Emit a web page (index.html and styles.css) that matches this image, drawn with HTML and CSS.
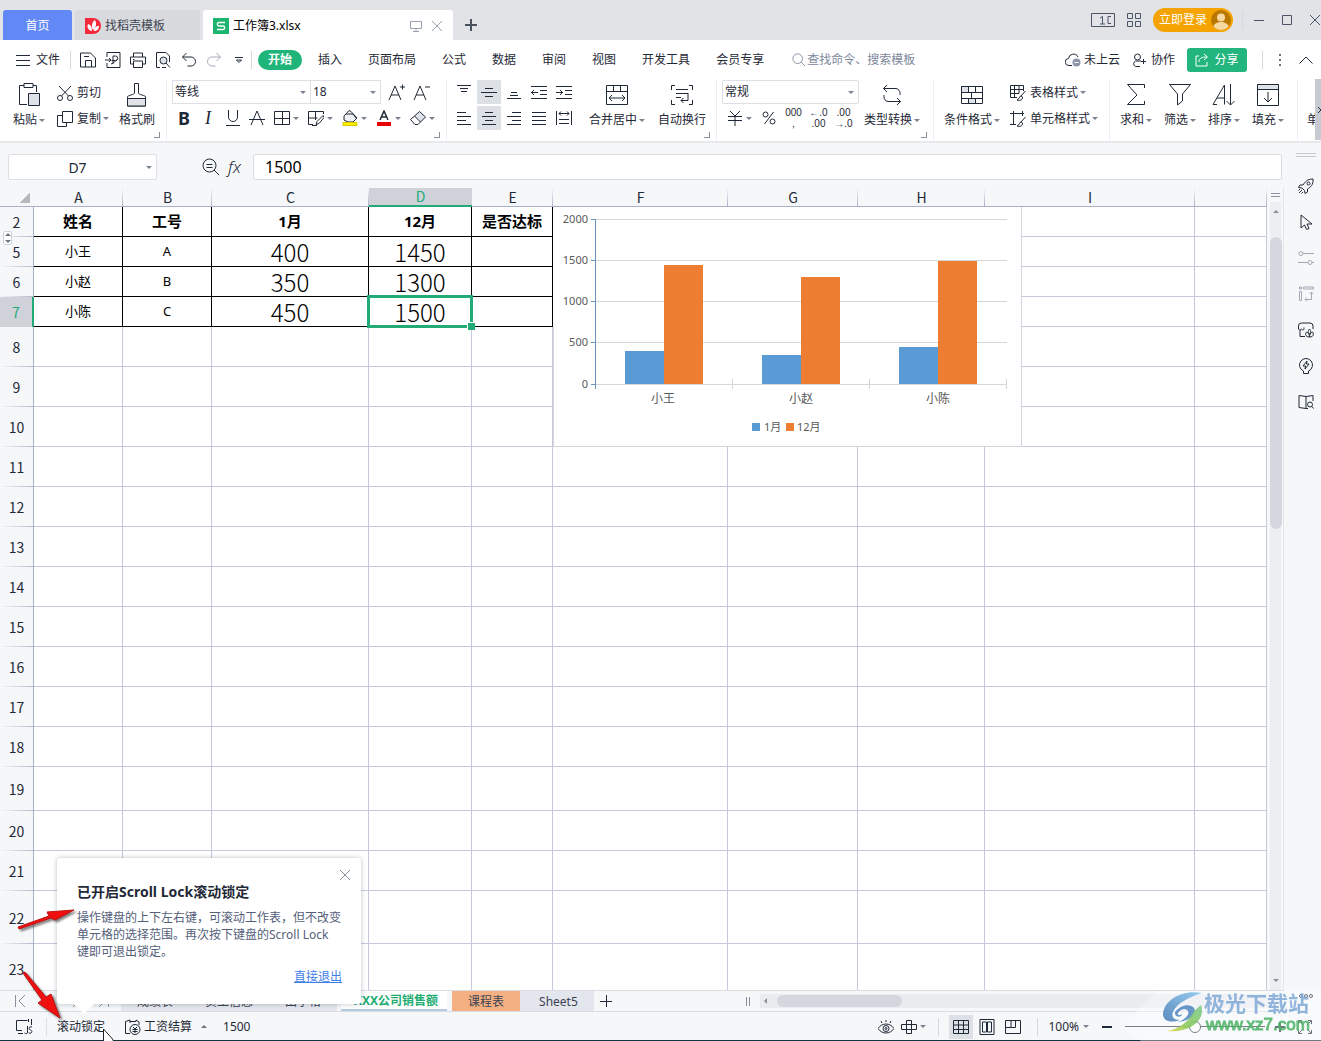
FILE: index.html
```html
<!DOCTYPE html>
<html lang="zh-CN">
<head>
<meta charset="utf-8">
<title>工作簿3.xlsx</title>
<link rel="stylesheet" href="styles.css">
</head>
<body>
<svg class="sprite" aria-hidden="true">
  <symbol id="save" viewBox="0 0 16 16"><path d="M.500 15V1h10l5 5v9zM5.500 15V8.500h6V15M4 4.500h5"/></symbol>
  <symbol id="pdf" viewBox="0 0 16 16"><path d="M2 5V.5h13v15H2V11M0 8h6M4 6l2 2-2 2M8 12V4h2.500a2 2 0 0 1 0 4.500H6.500M6 12c3-1 4-3 6-4"/></symbol>
  <symbol id="print" viewBox="0 0 16 16"><path d="M3.500 5V1h9v4M3 12H.500V5h15v7H13M3.500 9h9v6.500h-9zM3 7.500h1.500"/></symbol>
  <symbol id="preview" viewBox="0 0 16 16"><path d="M5 15.500H1.500V.500H11l3.500 3.500v6"/><circle cx="8.500" cy="8.500" r="3.500" fill="#dfe2e8"/><path d="M11 11l4 4.500M7 15.500h4"/></symbol>
  <symbol id="undo" viewBox="0 0 16 16"><path d="M5.500 1 1.500 5l4 4M1.500 5H10a4.500 4.500 0 0 1 0 9H6.500"/></symbol>
  <symbol id="cut" viewBox="0 0 16 16"><circle cx="3" cy="13" r="2.500"/><circle cx="13" cy="13" r="2.500"/><path d="M2 1l9.500 10M14 1 4.500 11"/></symbol>
  <symbol id="copy" viewBox="0 0 16 16"><path d="M5.500.500h10v11h-10z"/><path d="M5.500 4.500h-5v11h9v-4"/></symbol>
  <symbol id="paste" viewBox="0 0 24 26"><path d="M7 3.500H2.500v19H10M16 3.500h3.500V10M7 1.500h9v4H7z"/><path d="M11.500 11.500h11v12h-11z" fill="#dfe2e8"/></symbol>
  <symbol id="brush" viewBox="0 0 24 26"><path d="M9.500 1.500h4V11c0 2 7 2 7 4v9h-18v-9c0-2 7-2 7-4z"/><path d="M2.500 16.500h18v7.500h-18z" fill="#dfe2e8"/></symbol>
  <symbol id="aplus" viewBox="0 0 18 18"><path d="M1 17 7 3l6 14M3 12h8M12 4h5M14.500 1.500v5"/></symbol>
  <symbol id="aminus" viewBox="0 0 18 18"><path d="M1 17 7 3l6 14M3 12h8M12 4h5"/></symbol>
  <symbol id="underline" viewBox="0 0 16 16"><path d="M3.500 0v7a4.500 4.500 0 0 0 9 0V0M1 15.500h14"/></symbol>
  <symbol id="strike" viewBox="0 0 16 16"><path d="M2 15 8 1l6 14M0 9.500h16"/></symbol>
  <symbol id="border" viewBox="0 0 16 16"><path d="M.500 1.500h15v13H.500zM8.500 1.500v13M.500 8.500h15"/></symbol>
  <symbol id="penborder" viewBox="0 0 16 16"><path d="M5 14.500H.500v-13h15V4M.500 8h9M7.500 2v8M15 5.500l-6 6-1 3 3-1 5-6zM4 15.500h5"/></symbol>
  <symbol id="fill" viewBox="0 0 16 16"><path d="M7 .500 2 6v4l4 2h5l4-4-6-6.500z" fill="#f0f1f4"/><path d="M4 4h7l3 4"/><path d="M1 12.500h14v3H1z" fill="#fff200" stroke="#d6c800"/></symbol>
  <symbol id="fontcolor" viewBox="0 0 16 16"><path d="M4 10 8 1l4 9M5.500 7h5" stroke-width="1.500"/><path d="M1 12h14v4H1z" fill="#e60000" stroke="none"/></symbol>
  <symbol id="eraser" viewBox="0 0 16 16"><path d="M9.500 1.500l6 5.500-5 5-6-6z" fill="#dfe2e8"/><path d="M4.500 6 .500 9.500l4.500 5h3l2.500-2.500"/></symbol>
  <symbol id="vtop" viewBox="0 0 16 16"><path d="M1 1.500h14M4 4.500h8M5 7.500h6"/></symbol>
  <symbol id="vmid" viewBox="0 0 16 16"><path d="M4 4.500h8M0 8.500h16M4 12.500h8"/></symbol>
  <symbol id="vbot" viewBox="0 0 16 16"><path d="M5 8.500h6M4 11.500h8M1 14.500h14"/></symbol>
  <symbol id="outdent" viewBox="0 0 16 16"><path d="M0 2.500h16M9 6.500h7M9 10.500h7M0 14.500h16M0 8.500h7M3 6 .500 8.500 3 11"/></symbol>
  <symbol id="indent" viewBox="0 0 16 16"><path d="M0 2.500h16M9 6.500h7M9 10.500h7M0 14.500h16M0 8.500h7M4 6l2.500 2.500L4 11"/></symbol>
  <symbol id="left" viewBox="0 0 16 16"><path d="M1 2.500h9M1 6.500h14M1 10.500h9M1 14.500h14"/></symbol>
  <symbol id="center" viewBox="0 0 16 16"><path d="M4 2.500h8M1 6.500h14M4 10.500h8M1 14.500h14"/></symbol>
  <symbol id="right" viewBox="0 0 16 16"><path d="M6 2.500h9M1 6.500h14M6 10.500h9M1 14.500h14"/></symbol>
  <symbol id="justify" viewBox="0 0 16 16"><path d="M1 2.500h14M1 6.500h14M1 10.500h14M1 14.500h14"/></symbol>
  <symbol id="spread" viewBox="0 0 16 16"><path d="M.500 1v14M15.500 1v14M3 3.500h10M5 1.500l-2 2 2 2M11 1.500l2 2-2 2M3 9.500h10M3 13.500h10"/></symbol>
  <symbol id="merge" viewBox="0 0 24 24"><path d="M1.500 2.500h21v19h-21zM1.500 8.500h21M8.500 2.500v6M15.500 2.500v6M4 15h16M7 12l-3 3 3 3M17 12l3 3-3 3"/></symbol>
  <symbol id="wrap" viewBox="0 0 24 24"><path d="M5 2.500H1.500V7M19 2.500h3.500V7M5 21.500H1.500V17M19 21.500h3.500V17M6 6.500h12M6 10.500h12M6 14.500h5M18 10v7.500h-7M13.500 15 11 17.500l2.500 2.500"/></symbol>
  <symbol id="convert" viewBox="0 0 24 24"><path d="M7 2 3.500 5.500 7 9M3.500 5.500H16a5 5 0 0 1 4 5V12M17 15l3.500 3.500L17 22M20.500 18.500H8a5 5 0 0 1-4-5V12"/></symbol>
  <symbol id="cond" viewBox="0 0 24 24"><path d="M1.500 3.500h7v6h-7zM8.500 15.500h7v5h-7z" fill="#dfe2e8"/><path d="M1.500 3.500h21v17h-21zM1.500 9.500h21M1.500 15.500h21M8.500 3.500v6M15.500 3.500v6M11.500 9.500v6M8.500 15.500v5M15.500 15.500v5"/></symbol>
  <symbol id="tstyle" viewBox="0 0 16 16"><path d="M7 12.500H.500V.500h13V6M.500 4.500h13M.500 8.500H9M4.500.500v12M9 .500v8M15.500 6 11 11M11 11c-2 0-1 3-4 4 3 1 6 0 5.500-3z"/></symbol>
  <symbol id="cstyle" viewBox="0 0 16 16"><path d="M0 2.500h14M3.500 0v13.500M0 13.500h6M12.500 0v5M15.500 6 11 11M11 11c-2 0-1 3-4 4 3 1 6 0 5.500-3z"/></symbol>
  <symbol id="sum" viewBox="0 0 24 24"><path d="M20.500 5V1.500h-17L13 12 3.500 21.500h17V18"/></symbol>
  <symbol id="filter" viewBox="0 0 24 24"><path d="M1.500 1.500h21L14.500 11v7l-5 4V11z"/></symbol>
  <symbol id="sort" viewBox="0 0 24 24"><path d="M1 21.500 12.500 2v19.500M5 15h7.500M1 21.500h4M18.500 1v20.500M14.500 18l4 4 4-4"/></symbol>
  <symbol id="fillin" viewBox="0 0 24 24"><path d="M1.500 1.500h21v5h-21z" fill="#dfe2e8"/><path d="M1.500 1.500h21v21h-21zM12 9v10M8 15l4 4 4-4"/></symbol>
  <symbol id="cross" viewBox="0 0 12 12"><path d="M1 1l10 10M11 1 1 11"/></symbol>
  <symbol id="search" viewBox="0 0 16 16"><circle cx="6.500" cy="6.500" r="5.500"/><path d="M10.500 10.500 15 15"/></symbol>
</svg>

<header class="titlebar">
  <button class="home-tab">首页</button>
  <button class="doc-tab template-tab">
    <svg class="logo" viewBox="0 0 16 16"><path d="M0 0h8a8 8 0 0 1 0 16H0z" fill="#f5293c"/><path d="M7 13C2 12 2 8 3 6c3 1 4 3 4 7zM8 12C6 8 7 4 10 2c2 4 1 8-2 10zM9 13c0-3 2-5 5-5 0 3-2 5-5 5z" fill="#fff"/></svg>
    <span>找稻壳模板</span>
  </button>
  <div class="doc-tab active-doc">
    <svg class="logo" viewBox="0 0 16 16"><path d="M0 0h16v16H0z" fill="#1db46f"/><path d="M12 4.500H6a1.700 1.700 0 0 0 0 3.500h4a1.700 1.700 0 0 1 0 3.500H4" fill="none" stroke="#fff" stroke-width="1.300"/></svg>
    <span>工作簿3.xlsx</span>
    <svg class="ic i12 pale push" viewBox="0 0 12 12"><path d="M.500 1.500h11v7H.500zM6 8.500v3M3 11.500h6"/></svg>
    <button class="plain pale" aria-label="关闭"><svg class="ic i12"><use href="#cross"/></svg></button>
  </div>
  <button class="plain new-tab" aria-label="新建"><svg class="ic i12" viewBox="0 0 12 12"><path d="M6 0v12M0 6h12" stroke-width="2"/></svg></button>
  <div class="window-tools">
    <svg class="ic winpic" viewBox="0 0 24 16"><path d="M.500 1.500h23v13H.500zM20 4.500h-3v7h3M9 6l2.500-1.500V12M9 12h5"/></svg>
    <svg class="ic i14" viewBox="0 0 14 14"><path d="M.500.500h5v5h-5zM8.500.500h5v5h-5zM.500 8.500h5v5h-5zM8.500 8.500h5v5h-5z"/></svg>
    <button class="login"><span>立即登录</span>
      <svg class="avatar" viewBox="0 0 20 20"><circle cx="10" cy="10" r="10" fill="#b97800"/><circle cx="10" cy="7.500" r="4" fill="#f6d9a0"/><path d="M2.500 16.500c1-6 14-6 15 0a10 10 0 0 1-15 0z" fill="#f6d9a0"/></svg></button>
    <span class="vsep"></span>
    <button class="plain" aria-label="最小化"><svg class="ic i12" viewBox="0 0 12 12"><path d="M1 6.500h10"/></svg></button>
    <button class="plain" aria-label="最大化"><svg class="ic i12" viewBox="0 0 12 12"><path d="M1.500 1.500h9v9h-9z"/></svg></button>
    <button class="plain" aria-label="关闭窗口"><svg class="ic i12"><use href="#cross"/></svg></button>
  </div>
</header>

<nav class="menubar">
  <button class="plain file"><svg class="ic i14" viewBox="0 0 14 14"><path d="M0 2.500h14M0 7.500h14M0 12.500h14"/></svg>文件</button>
  <span class="vsep"></span>
  <div class="quick">
    <button class="plain" aria-label="保存"><svg class="ic"><use href="#save"/></svg></button>
    <button class="plain" aria-label="输出为PDF"><svg class="ic"><use href="#pdf"/></svg></button>
    <button class="plain" aria-label="打印"><svg class="ic"><use href="#print"/></svg></button>
    <button class="plain" aria-label="打印预览"><svg class="ic"><use href="#preview"/></svg></button>
    <button class="plain" aria-label="撤销"><svg class="ic"><use href="#undo"/></svg></button>
    <button class="plain faded" aria-label="恢复"><svg class="ic flip"><use href="#undo"/></svg></button>
    <button class="plain" aria-label="更多"><svg class="ic i8" viewBox="0 0 8 8"><path d="M0 1.500h8M1.500 4h5L4 6.500z"/></svg></button>
  </div>
  <span class="vsep"></span>
  <div class="menus">
    <button class="plain current">开始</button>
    <button class="plain">插入</button>
    <button class="plain">页面布局</button>
    <button class="plain">公式</button>
    <button class="plain">数据</button>
    <button class="plain">审阅</button>
    <button class="plain">视图</button>
    <button class="plain">开发工具</button>
    <button class="plain">会员专享</button>
  </div>
  <label class="finder"><svg class="ic i14"><use href="#search"/></svg><input type="text" placeholder="查找命令、搜索模板" aria-label="查找命令"></label>
  <div class="account">
    <button class="plain cloud"><svg class="ic" viewBox="0 0 16 16"><path d="M7 13.500H4a3.500 3.500 0 0 1-.500-7A5 5 0 0 1 13 5"/><circle cx="11.500" cy="10.500" r="4" fill="#8f97a8" stroke="none"/><path d="M9.500 10.500h4" stroke="#fff"/></svg>未上云</button>
    <button class="plain coop"><svg class="ic i14" viewBox="0 0 14 14"><circle cx="5.500" cy="4" r="3"/><path d="M9 8H3.500a3 3 0 0 0 0 5.500H8M9 8.500h5M11.500 6v5"/></svg>协作</button>
    <button class="share"><svg class="ic i14" viewBox="0 0 14 14"><path d="M4 3H1v10h11V9M4 9c0-4 3-5 8-5M9 1l3.500 3L9 7"/></svg>分享</button>
    <span class="vsep"></span>
    <button class="plain" aria-label="更多选项"><svg class="ic i14" viewBox="0 0 14 14"><path d="M6 1h2v2H6zM6 6h2v2H6zM6 11h2v2H6z" fill="#6b7380" stroke="none"/></svg></button>
    <button class="plain" aria-label="折叠功能区"><svg class="ic i14" viewBox="0 0 14 14"><path d="M.500 10.500 7 4l6.500 6.500"/></svg></button>
  </div>
</nav>

<section class="ribbon" aria-label="开始">
  <div class="group g-clip corner">
    <button class="big"><svg class="ic i24"><use href="#paste"/></svg><span class="drop">粘贴</span></button>
    <div class="stack">
      <button class="line"><svg class="ic"><use href="#cut"/></svg><span>剪切</span></button>
      <button class="line"><svg class="ic"><use href="#copy"/></svg><span class="drop">复制</span></button>
    </div>
    <button class="big"><svg class="ic i24"><use href="#brush"/></svg><span>格式刷</span></button>
  </div>
  <div class="group g-font corner">
    <div class="stack">
      <div class="tools">
        <span class="pick pick-font"><select aria-label="字体"><option>等线</option></select></span>
        <span class="pick pick-size"><select aria-label="字号"><option>18</option></select></span>
        <button class="tool first-a" aria-label="增大字号"><svg class="ic i18"><use href="#aplus"/></svg></button>
        <button class="tool" aria-label="减小字号"><svg class="ic i18"><use href="#aminus"/></svg></button>
      </div>
      <div class="tools letters">
        <button class="tool bold">B</button>
        <button class="tool italic">I</button>
        <button class="tool" aria-label="下划线"><svg class="ic"><use href="#underline"/></svg></button>
        <button class="tool" aria-label="删除线"><svg class="ic"><use href="#strike"/></svg></button>
        <button class="tool wide drop" aria-label="边框"><svg class="ic"><use href="#border"/></svg></button>
        <button class="tool wide drop" aria-label="绘图边框"><svg class="ic"><use href="#penborder"/></svg></button>
        <button class="tool wide drop" aria-label="填充颜色"><svg class="ic"><use href="#fill"/></svg></button>
        <button class="tool wide drop" aria-label="字体颜色"><svg class="ic"><use href="#fontcolor"/></svg></button>
        <button class="tool wide drop" aria-label="清除"><svg class="ic"><use href="#eraser"/></svg></button>
      </div>
    </div>
  </div>
  <div class="group g-align corner">
    <div class="align-grid">
      <button class="tool" aria-label="顶端对齐"><svg class="ic"><use href="#vtop"/></svg></button>
      <button class="tool on" aria-label="垂直居中"><svg class="ic"><use href="#vmid"/></svg></button>
      <button class="tool" aria-label="底端对齐"><svg class="ic"><use href="#vbot"/></svg></button>
      <button class="tool" aria-label="减少缩进"><svg class="ic"><use href="#outdent"/></svg></button>
      <button class="tool" aria-label="增加缩进"><svg class="ic"><use href="#indent"/></svg></button>
      <button class="tool" aria-label="左对齐"><svg class="ic"><use href="#left"/></svg></button>
      <button class="tool on" aria-label="水平居中"><svg class="ic"><use href="#center"/></svg></button>
      <button class="tool" aria-label="右对齐"><svg class="ic"><use href="#right"/></svg></button>
      <button class="tool" aria-label="两端对齐"><svg class="ic"><use href="#justify"/></svg></button>
      <button class="tool" aria-label="分散对齐"><svg class="ic"><use href="#spread"/></svg></button>
    </div>
    <button class="big"><svg class="ic i24"><use href="#merge"/></svg><span class="drop">合并居中</span></button>
    <button class="big"><svg class="ic i24"><use href="#wrap"/></svg><span>自动换行</span></button>
  </div>
  <div class="group g-number corner">
    <div class="stack">
      <span class="pick pick-number"><select aria-label="数字格式"><option>常规</option></select></span>
      <div class="tools">
        <button class="tool wide drop" aria-label="货币"><svg class="ic" viewBox="0 0 16 16"><path d="M3 1l5 5 5-5M1 6.500h14M1 10.500h14M8 6v10"/></svg></button>
        <button class="tool" aria-label="百分比"><svg class="ic i14" viewBox="0 0 14 14"><circle cx="3.500" cy="3.500" r="2.500"/><circle cx="10.500" cy="10.500" r="2.500"/><path d="M11.500 1l-9 12"/></svg></button>
        <button class="tool digits"><span>000</span><span>,</span></button>
        <button class="tool digits"><span>←.0</span><span>.00</span></button>
        <button class="tool digits"><span>.00</span><span>→.0</span></button>
      </div>
    </div>
    <button class="big"><svg class="ic i24"><use href="#convert"/></svg><span class="drop">类型转换</span></button>
  </div>
  <div class="group g-style">
    <button class="big"><svg class="ic i24"><use href="#cond"/></svg><span class="drop">条件格式</span></button>
    <div class="stack">
      <button class="line"><svg class="ic"><use href="#tstyle"/></svg><span class="drop">表格样式</span></button>
      <button class="line"><svg class="ic"><use href="#cstyle"/></svg><span class="drop">单元格样式</span></button>
    </div>
  </div>
  <div class="group g-edit">
    <button class="big"><svg class="ic i24"><use href="#sum"/></svg><span class="drop">求和</span></button>
    <button class="big"><svg class="ic i24"><use href="#filter"/></svg><span class="drop">筛选</span></button>
    <button class="big"><svg class="ic i24"><use href="#sort"/></svg><span class="drop">排序</span></button>
    <button class="big"><svg class="ic i24"><use href="#fillin"/></svg><span class="drop">填充</span></button>
  </div>
  <div class="group g-more"><button class="big"><span>单</span></button></div>
  <button class="ribbon-next" aria-label="向右滚动"><svg class="ic i8" viewBox="0 0 8 8"><path d="M3 1l3 3-3 3"/></svg></button>
</section>

<main class="workspace">
  <div class="book">
    <div class="formula-bar">
      <div class="pick name-box"><input type="text" value="D7" aria-label="名称框"></div>
      <div class="fx-tools">
        <button class="plain" aria-label="浏览公式"><svg class="ic i18" viewBox="0 0 18 18"><circle cx="7.500" cy="7.500" r="6.500"/><path d="M12 12l5 5M4.500 6.500h6M4.500 9.500h6"/></svg></button>
        <button class="plain fx">fx</button>
      </div>
      <input class="formula" type="text" value="1500" aria-label="编辑栏">
    </div>
    <div class="grid-area">
      <div class="sheet">
        <table>
          <colgroup><col class="c-head"><col class="c-a"><col class="c-a"><col class="c-c"><col class="c-d"><col class="c-e"><col class="c-f"><col class="c-g"><col class="c-h"><col class="c-i"><col></colgroup>
          <thead><tr><th class="all"></th><th>A</th><th>B</th><th>C</th><th class="sel">D</th><th>E</th><th>F</th><th>G</th><th>H</th><th>I</th><th></th></tr></thead>
          <tbody>
            <tr class="data head"><th>2</th><td>姓名</td><td>工号</td><td>1月</td><td>12月</td><td>是否达标</td><td></td><td></td><td></td><td></td><td></td></tr>
            <tr class="data"><th>5</th><td>小王</td><td>A</td><td class="num">400</td><td class="num">1450</td><td></td><td></td><td></td><td></td><td></td><td></td></tr>
            <tr class="data"><th>6</th><td>小赵</td><td>B</td><td class="num">350</td><td class="num">1300</td><td></td><td></td><td></td><td></td><td></td><td></td></tr>
            <tr class="data"><th class="sel">7</th><td>小陈</td><td>C</td><td class="num">450</td><td class="num picked">1500</td><td></td><td></td><td></td><td></td><td></td><td></td></tr>
            <tr><th>8</th><td></td><td></td><td></td><td></td><td></td><td></td><td></td><td></td><td></td><td></td></tr>
            <tr><th>9</th><td></td><td></td><td></td><td></td><td></td><td></td><td></td><td></td><td></td><td></td></tr>
            <tr><th>10</th><td></td><td></td><td></td><td></td><td></td><td></td><td></td><td></td><td></td><td></td></tr>
            <tr><th>11</th><td></td><td></td><td></td><td></td><td></td><td></td><td></td><td></td><td></td><td></td></tr>
            <tr><th>12</th><td></td><td></td><td></td><td></td><td></td><td></td><td></td><td></td><td></td><td></td></tr>
            <tr><th>13</th><td></td><td></td><td></td><td></td><td></td><td></td><td></td><td></td><td></td><td></td></tr>
            <tr><th>14</th><td></td><td></td><td></td><td></td><td></td><td></td><td></td><td></td><td></td><td></td></tr>
            <tr><th>15</th><td></td><td></td><td></td><td></td><td></td><td></td><td></td><td></td><td></td><td></td></tr>
            <tr><th>16</th><td></td><td></td><td></td><td></td><td></td><td></td><td></td><td></td><td></td><td></td></tr>
            <tr><th>17</th><td></td><td></td><td></td><td></td><td></td><td></td><td></td><td></td><td></td><td></td></tr>
            <tr><th>18</th><td></td><td></td><td></td><td></td><td></td><td></td><td></td><td></td><td></td><td></td></tr>
            <tr class="h44"><th>19</th><td></td><td></td><td></td><td></td><td></td><td></td><td></td><td></td><td></td><td></td></tr>
            <tr><th>20</th><td></td><td></td><td></td><td></td><td></td><td></td><td></td><td></td><td></td><td></td></tr>
            <tr><th>21</th><td></td><td></td><td></td><td></td><td></td><td></td><td></td><td></td><td></td><td></td></tr>
            <tr class="h53"><th>22</th><td></td><td></td><td></td><td></td><td></td><td></td><td></td><td></td><td></td><td></td></tr>
            <tr class="h50"><th>23</th><td></td><td></td><td></td><td></td><td></td><td></td><td></td><td></td><td></td><td></td></tr>
          </tbody>
        </table>
        <span class="hidden-rows"></span>
        <svg class="chart" viewBox="0 0 469 240" role="img" aria-label="1月与12月对比">
          <path d="M0 0h469v240H0z" fill="#fff"/>
          <path d="M468.500 0v239.500H0M.500 120v120" fill="none" stroke="#d4d5dc"/>
          <path d="M42 12.500h412M42 53.500h412M42 94.500h412M42 135.500h412M42 177.500h412M179.500 172v10M316.500 172v10M453.500 172v10" stroke="#d4d6da"/>
          <path d="M42.500 12v170M38 12.500h4M38 53.500h4M38 94.500h4M38 135.500h4M38 177.500h4" stroke="#6d93bd"/>
          <path d="M72 144h39v33H72zM209 148h39v29h-39zM346 140h39v37h-39zM199 216h8v8h-8z" fill="#5b9bd5"/>
          <path d="M111 58h39v119h-39zM248 70h39v107h-39zM385 54h39v123h-39zM233 216h8v8h-8z" fill="#ed7d31"/>
          <g text-anchor="end"><text x="35" y="16">2000</text><text x="35" y="57">1500</text><text x="35" y="98">1000</text><text x="35" y="139">500</text><text x="35" y="181">0</text></g>
          <g text-anchor="middle" class="cat"><text x="110" y="196">小王</text><text x="248" y="196">小赵</text><text x="385" y="196">小陈</text></g>
          <text x="211" y="224">1月</text><text x="244" y="224">12月</text>
        </svg>
      </div>
      <div class="vscroll"><span class="split"></span><span class="track"><i class="up"></i><span class="thumb"></span><i class="down"></i></span></div>
    </div>
    <div class="sheet-tabs">
      <div class="tab-nav">
        <button class="plain" aria-label="首个"><svg class="ic i12" viewBox="0 0 12 12"><path d="M1.500 0v12M11 0 5 6l6 6"/></svg></button>
        <button class="plain" aria-label="上一个"><svg class="ic i12" viewBox="0 0 12 12"><path d="M9 0 3 6l6 6"/></svg></button>
        <button class="plain" aria-label="下一个"><svg class="ic i12" viewBox="0 0 12 12"><path d="M3 0l6 6-6 6"/></svg></button>
        <button class="plain" aria-label="末个"><svg class="ic i12" viewBox="0 0 12 12"><path d="M10.500 0v12M1 0l6 6-6 6"/></svg></button>
      </div>
      <button class="sheet-tab">成绩表</button>
      <button class="sheet-tab">员工信息</button>
      <button class="sheet-tab">田字格</button>
      <button class="sheet-tab active">XXX公司销售额</button>
      <button class="sheet-tab orange">课程表</button>
      <button class="sheet-tab last">Sheet5</button>
      <button class="plain add" aria-label="新建工作表"><svg class="ic i12" viewBox="0 0 12 12"><path d="M6.500 0v12M0 6.500h12"/></svg></button>
      <div class="hscroll"><span class="grip"></span><span class="htrack"><i></i><span class="hthumb"></span></span></div>
    </div>
  </div>
  <aside class="side">
    <span class="side-grip"></span>
    <button class="plain" aria-label="推荐"><svg class="ic" viewBox="0 0 16 16"><path d="M15 1c-6 0-8 3-10 6H2L.500 9.500 4 10l2.500 2.500.500 3L9.500 14v-3c3-2 6-4 5.500-10zM4 12l-3 3M2 11l-1.500 1.500M5 14l-1.500 1.500"/><circle cx="10.500" cy="5.500" r="1.500"/></svg></button>
    <button class="plain" aria-label="选择"><svg class="ic" viewBox="0 0 16 16"><path d="M3 1v13l3.500-3 2 4.500 2.500-1-2-4.500h5z"/></svg></button>
    <button class="plain faded" aria-label="属性"><svg class="ic" viewBox="0 0 16 16"><circle cx="3" cy="3.500" r="2"/><circle cx="12" cy="12.500" r="2"/><path d="M5 3.500h11M0 12.500h10M14 12.500h2"/></svg></button>
    <button class="plain faded" aria-label="分析"><svg class="ic" viewBox="0 0 16 16"><path d="M1.500 1h2v2h-2zM5.500 1h10v2h-10zM1.500 5.500h2v9h-2zM13.500 6v7.500H7M11.500 8l2-2 2 2M9 11.500l-2 2 2 2"/></svg></button>
    <button class="plain" aria-label="备份"><svg class="ic" viewBox="0 0 16 16"><path d="M7 14.500H2v-6L.500 7V4a3 3 0 0 1 3-3H12a3 3 0 0 1 3 3v3M2 8.500c0-1 1-2 2-1 1 1 2 1 2-2"/><path d="M11.500 15c-5 0-4-4-3-5 2 1 3 2 3 5zM11.500 15c5 0 4-4 3-5-2 1-3 2-3 5zM11.500 12c-2-2-1-4 0-5 1 1 2 3 0 5z"/></svg></button>
    <button class="plain" aria-label="效率"><svg class="ic" viewBox="0 0 16 16"><path d="M5.500 15.500V13a6.500 6.500 0 1 1 5 0v2.500zM9 3 5 8h2.500L7 11l4-5H8.500z"/></svg></button>
    <button class="plain" aria-label="帮助"><svg class="ic" viewBox="0 0 16 16"><path d="M8 14.500l-7-1v-12l7 1 7-1V7M8 2.500v12h2"/><circle cx="12" cy="10.500" r="2.500"/><path d="M14 12.500l1.500 2"/></svg></button>
    <button class="plain side-more" aria-label="更多"><svg class="ic" viewBox="0 0 16 16"><circle cx="3" cy="8" r="1.500"/><circle cx="8" cy="8" r="1.500"/><circle cx="13" cy="8" r="1.500"/></svg></button>
  </aside>
</main>

<footer class="status">
  <button class="plain js" aria-label="JS宏"><svg class="ic i18" viewBox="0 0 18 18"><path d="M7 12.500H1.500v-10h11M3 15.500h5M13.500 1v3M16.500 1v6M12.500 8v6c0 2-2 2-3 1M17 9c-3-1-4 2-1.500 3s1.500 4-2 3"/></svg></button>
  <div class="lock-holder">
    <button class="plain">滚动锁定</button>
    <div class="popup" role="dialog" aria-label="滚动锁定">
      <button class="plain close" aria-label="关闭提示"><svg class="ic i12"><use href="#cross"/></svg></button>
      <h2>已开启Scroll Lock滚动锁定</h2>
      <p>操作键盘的上下左右键，可滚动工作表，但不改变单元格的选择范围。再次按下键盘的Scroll Lock<br>键即可退出锁定。</p>
      <a href="#">直接退出</a>
    </div>
  </div>
  <button class="plain pay"><svg class="ic" viewBox="0 0 16 16"><path d="M5 14.500H.500v-12L5 1v3M5 2.500h6V1l3 2v3"/><circle cx="10" cy="10.500" r="5"/><path d="M8 8l2 2 2-2M7.500 10.500h5M7.500 12.500h5M10 10v4"/></svg>工资结算<i class="tri-up"></i></button>
  <output>1500</output>
  <div class="status-right">
    <button class="plain" aria-label="护眼模式"><svg class="ic" viewBox="0 0 16 16"><path d="M0 9.500c4-6 12-6 16 0-4 6-12 6-16 0zM8 1v2M3 2l1 2M13 2l-1 2"/><circle cx="8" cy="9.500" r="3"/><circle cx="8" cy="9.500" r="1"/></svg></button>
    <button class="plain drop" aria-label="阅读模式"><svg class="ic" viewBox="0 0 16 16"><path d="M5.500 1.500h5v13h-5zM.500 5.500h15v5H.500z"/></svg></button>
    <span class="vsep"></span>
    <div class="views">
      <button class="tool on" aria-label="普通视图"><svg class="ic" viewBox="0 0 16 16"><path d="M.500 1.500h15v13H.500zM5.500 1.500v13M10.500 1.500v13M.500 6h15M.500 10.500h15"/></svg></button>
      <button class="tool" aria-label="页面布局"><svg class="ic" viewBox="0 0 16 16"><path d="M1 .500h14v15H1zM3.500 3h4v10h-4zM8.500 3h4v10h-4z"/></svg></button>
      <button class="tool" aria-label="分页预览"><svg class="ic" viewBox="0 0 16 16"><path d="M.500 1.500h15v13H.500zM.500 8.500h10v-7M6 1.500v7"/></svg></button>
    </div>
    <span class="vsep"></span>
    <button class="plain drop zoom-value">100%</button>
    <button class="plain" aria-label="缩小"><svg class="ic i12" viewBox="0 0 12 12"><path d="M1 6h10" stroke-width="2"/></svg></button>
    <input class="zoom" type="range" min="0" max="200" value="100" aria-label="缩放">
    <button class="plain" aria-label="放大"><svg class="ic i12" viewBox="0 0 12 12"><path d="M1 6h10M6 1v10" stroke-width="2"/></svg></button>
    <button class="plain" aria-label="全屏"><svg class="ic i14" viewBox="0 0 14 14"><path d="M.500 4V.500H4M10 .500h3.500V4M13.500 10v3.500H10M4 13.500H.500V10M1 1l4 4M13 1 9 5M13 13 9 9M1 13l4-4"/></svg></button>
  </div>
</footer>

<svg class="arrows" viewBox="0 0 120 140" aria-hidden="true">
  <g class="shade"><path d="M18 26 49 15 47 11 74 9 55 19 51 17 19 28z"/><path d="M23 72 42 99 38 102 60 117 51 93 46 96 25 71z"/></g>
  <path d="M103.500 128v18l4-4 3 5h6l-4-9z" fill="#fff" stroke="#222"/>
</svg>
<svg class="watermark" viewBox="0 0 200 56" aria-hidden="true">
  <defs>
    <linearGradient id="leaf" x1="1" y1="0" x2="0" y2="1"><stop offset="0" stop-color="#7cc98a"/><stop offset=".6" stop-color="#8ccb63"/><stop offset="1" stop-color="#e6d544"/></linearGradient>
    <linearGradient id="wave" x1="1" y1="0" x2="0" y2="1"><stop offset="0" stop-color="#8cc8ee"/><stop offset="1" stop-color="#4c7fb8"/></linearGradient>
  </defs>
  <path d="M36 6h164v50H20L0 42z" fill="#fff" opacity=".35"/>
  <path d="M81 8C62 4 42 15 42 30c1 7 9 8 17 5-6 0-9-3-7-8 4-9 16-15 29-19z" fill="url(#wave)" opacity=".9"/>
  <path d="M54 27c5-7 15-9 19-4 4 6-5 13-16 14 6-2 12-7 10-11-2-3-8-2-10 2-1 2 2 3 4 1 0 4-8 4-7-2z" fill="#4f86bd" opacity=".85"/>
  <path d="M46 46c10-1 22-9 27-20l7-6c5 14-9 28-34 26z" fill="url(#leaf)" opacity=".9"/>
  <text class="wm-name" x="83" y="26">极光下载站</text>
  <text class="wm-url" x="85" y="45">www.xz7.com</text>
</svg>
</body>
</html>
```
FILE: styles.css
```css
* { box-sizing: border-box; }

body {
  margin: 0;
  height: 100vh;
  display: flex;
  flex-direction: column;
  overflow: hidden;
  position: relative;
  background: #f5f7f9;
  color: #1f2937;
  font: 12px/16px "Noto Sans", "Noto Sans CJK SC", sans-serif;
}

button, input, select { font: inherit; color: inherit; }

button {
  border: 0;
  padding: 0;
  margin: 0;
  background: none;
  white-space: nowrap;
}

.sprite { position: absolute; width: 0; height: 0; }

.ic {
  display: block;
  flex: none;
  width: 16px;
  height: 16px;
  fill: none;
  stroke: currentColor;
  stroke-width: 1;
}
.i8 { width: 8px; height: 8px; }
.i12 { width: 12px; height: 12px; }
.i14 { width: 14px; height: 14px; }
.i18 { width: 18px; height: 18px; }
.i24 { width: 24px; height: 26px; }
.flip { transform: scaleX(-1); }
.faded { color: #a3a9b5; }
.pale { color: #9aa1ad; }

.plain { display: flex; align-items: center; justify-content: center; }
.vsep { flex: none; width: 1px; height: 18px; background: #d5d8df; }

.drop { display: flex; align-items: center; justify-content: center; gap: 3px; }
.drop::after, .pick::after {
  content: "";
  flex: none;
  border: 3px solid transparent;
  border-top-color: #7b828f;
  border-bottom: 0;
}

/* Title bar */
.titlebar {
  flex: none;
  height: 40px;
  display: flex;
  align-items: flex-end;
  padding-left: 3px;
  background: #e1e3e7;
}
.home-tab {
  width: 69px;
  height: 30px;
  padding-top: 1px;
  margin-right: 3px;
  border-radius: 3px 3px 0 0;
  background: #6188f5;
  color: #fff;
}
.doc-tab { height: 30px; padding-top: 2px; display: flex; align-items: center; border-radius: 3px 3px 0 0; }
.template-tab { width: 125px; margin-right: 3px; padding-left: 10px; gap: 4px; background: #d8dade; color: #3f4652; }
.active-doc { width: 250px; padding: 2px 10px 0; gap: 4px; background: #fff; color: #000; }
.active-doc .push { margin: 0 5px 0 auto; }
.logo { width: 16px; height: 16px; flex: none; }
.new-tab { width: 36px; height: 30px; color: #4a5260; }
.window-tools {
  margin-left: auto;
  align-self: stretch;
  display: flex;
  align-items: center;
  gap: 12px;
  padding-right: 1px;
  color: #4a5468;
}
.window-tools .plain:last-child { margin-left: 5px; margin-right: -1px; }
.window-tools .plain + .plain { margin-left: 4px; }
.window-tools .vsep { margin-left: -3px; margin-right: -2px; }
.winpic { width: 24px; }
.login {
  display: flex;
  align-items: center;
  justify-content: space-between;
  width: 80px;
  height: 24px;
  padding: 0 2px 0 6px;
  border-radius: 12px;
  background: #f5a300;
  color: #fff;
}
.avatar { width: 20px; height: 20px; flex: none; }

/* Menu bar */
.menubar { flex: none; height: 39px; display: flex; align-items: center; background: #fff; padding: 0 8px 0 16px; }
.file { gap: 6px; margin-right: 10px; }
.quick { display: flex; align-items: center; width: 180px; padding: 0 4px 0 9px; justify-content: space-between; }
.quick .plain { width: 16px; height: 24px; }
.menus { display: flex; align-items: center; gap: 26px; margin-left: 6px; }
.menus .current {
  width: 44px;
  height: 20px;
  margin-right: -10px;
  border-radius: 10px;
  background: #1fb57a;
  color: #fff;
  font-weight: bold;
}
.finder { display: flex; align-items: center; gap: 1px; margin-left: 28px; color: #7d879a; }
.finder input { width: 120px; border: 0; padding: 0; background: none; outline: 0; }
.finder input::placeholder { color: #7d879a; opacity: 1; }
.account { display: flex; align-items: center; gap: 12px; margin-left: auto; }
.cloud { gap: 3px; }
.coop { gap: 5px; }
.share {
  display: flex;
  align-items: center;
  justify-content: center;
  gap: 5px;
  width: 60px;
  height: 24px;
  border-radius: 3px;
  background: #22b57e;
  color: #fff;
}
.account .vsep { margin: 0 -2px 0 3px; }

/* Ribbon */
.ribbon {
  flex: none;
  display: flex;
  position: relative;
  height: 64px;
  overflow: hidden;
  padding-right: 6px;
  background: #fff;
  border-bottom: 2px solid #e6e8eb;
}
.group { flex: none; display: flex; position: relative; height: 61px; border-right: 1px solid #eceef1; }
.g-clip { width: 167px; padding-left: 13px; }
.g-font { width: 280px; padding-left: 5px; }
.g-align { width: 270px; padding-left: 5px; }
.g-number { width: 217px; padding-left: 5px; }
.g-style { width: 176px; padding-left: 10px; gap: 10px; }
.g-edit { width: 188px; padding-left: 10px; gap: 12px; }
.g-more { flex: 1 1 0; min-width: 0; padding-left: 9px; overflow: hidden; border-right: 0; }
.g-more .big { padding-top: 33px; }
.g-clip .stack { margin: 0 10px 0 12px; }
.corner::after {
  content: "";
  position: absolute;
  right: 6px;
  bottom: 2px;
  width: 5px;
  height: 5px;
  border: solid #8b919c;
  border-width: 0 1px 1px 0;
}
.big { flex: none; height: 52px; padding-top: 3px; display: flex; flex-direction: column; align-items: center; gap: 4px; }
.big .drop, .line .drop { gap: 2px; }
.stack { display: flex; flex-direction: column; }
.line { height: 26px; padding-top: 1px; display: flex; align-items: center; gap: 4px; }
.tools { display: flex; align-items: center; height: 26px; }
.tool { flex: none; width: 25px; height: 24px; display: flex; align-items: center; justify-content: center; }
.tool.wide { width: 34px; }
.tool.on { background: #dde1e6; }
.letters .tool:not(.wide) { width: 24px; }
.letters .italic { margin-right: 1px; }
.letters .tool + .wide { margin-left: 0; }
.bold { font: bold 18px/24px "Noto Sans", sans-serif; }
.italic { font: italic 18px/24px "Liberation Serif", serif; }
.first-a { margin-left: 3px; }
.digits { flex-direction: column; font: 10px/11px "Liberation Sans", sans-serif; }
.align-grid { display: grid; grid-template-columns: repeat(5, 24px); gap: 2px 1px; padding-top: 1px; margin-right: 13px; align-content: start; }
.align-grid .tool { width: 24px; }
.g-align .big + .big { margin-left: 13px; }
.g-number .big { margin-left: 5px; }

.pick {
  display: flex;
  align-items: center;
  position: relative;
  height: 24px;
  padding-right: 4px;
  border: 1px solid #dcdfe4;
  background: #fff;
}
.pick select, .pick input {
  flex: 1;
  min-width: 0;
  height: 22px;
  padding: 0 2px;
  border: 0;
  outline: 0;
  background: none;
  appearance: none;
}
.pick-font { width: 139px; }
.pick-size { width: 70px; border-left: 0; }
.pick-number { width: 137px; margin: 1px 0; border-radius: 2px; }

.ribbon-next {
  position: absolute;
  top: 0;
  right: 0;
  width: 6px;
  height: 61px;
  overflow: hidden;
  background: #c7cad2;
}

/* Workspace */
.workspace { flex: 1; min-height: 0; display: flex; }
.book { flex: 1; min-width: 0; display: flex; flex-direction: column; }
.formula-bar { flex: none; display: flex; align-items: center; height: 45px; padding: 3px 2px 0 8px; }
.name-box { width: 149px; height: 26px; border-radius: 2px; }
.name-box input { text-align: center; font-size: 14px; }
.fx-tools { display: flex; align-items: center; gap: 8px; margin-left: 45px; width: 51px; }
.fx { font: italic 300 17px/20px "Noto Sans", sans-serif; }
.formula {
  flex: 1;
  min-width: 0;
  height: 26px;
  padding: 0 11px;
  border: 1px solid #d9dce1;
  border-radius: 2px;
  background: #fff;
  color: #000;
  font-size: 16px;
  outline: 0;
}

.grid-area { flex: 1; min-height: 0; display: flex; }
.sheet { flex: 1; min-width: 0; position: relative; overflow: hidden; background: #fff; }
table { width: 100%; table-layout: fixed; border-collapse: separate; border-spacing: 0; }
.c-head { width: 34px; }
.c-a { width: 89px; }
.c-c { width: 157px; }
.c-d { width: 103px; }
.c-e { width: 81px; }
.c-f { width: 175px; }
.c-g { width: 130px; }
.c-h { width: 127px; }
.c-i { width: 210px; }
th, td { padding: 0; text-align: center; vertical-align: middle; }
thead th {
  height: 19px;
  border-bottom: 1px solid #a9b0cb;
  background: linear-gradient(#f5f7f9, #aab0c6) right / 1px 100% no-repeat #f5f7f9;
  font: 14px/17px "Noto Sans CJK SC", sans-serif;
}
thead th.sel { border-bottom: 2px solid #22ab76; background: #cfd2d8; color: #22ab76; }
thead th.all { background: linear-gradient(135deg, transparent 50%, #b5b9bd 50%) 20px 5px / 10px 10px no-repeat #f5f7f9; }
tbody tr { height: 40px; }
tbody th {
  border-right: 1px solid #a9b0cb;
  background: linear-gradient(90deg, #f5f7f9, #b4b9cd) bottom / 100% 1px no-repeat #f5f7f9;
  font: 14px/18px "Noto Sans CJK SC", sans-serif;
}
tbody th.sel { border-right: 2px solid #22ab76; background: #cfd2d8; color: #22ab76; }
tbody td { border-right: 1px solid #c6c8db; border-bottom: 1px solid #c6c8db; }
tr.h44 { height: 44px; }
tr.h50 { height: 50px; }
tr.h53 { height: 53px; }
tr.data { height: 30px; }
tr.data td { padding-bottom: 2px; font-size: 13px; line-height: 18px; color: #000; }
tr.data td:nth-child(-n+6) { border-color: #000; }
tr.head td { font-size: 15px; font-weight: bold; }
tr.data td.num { padding: 1px 0 0; font: 300 24px/28px "Noto Sans CJK SC", sans-serif; }
td.picked { position: relative; }
td.picked::before { content: ""; position: absolute; inset: -2px; border: 3px solid #22ab76; }
td.picked::after { content: ""; position: absolute; right: -4px; bottom: -4px; width: 7px; height: 7px; border: solid #fff; border-width: 1px 0 0 1px; background: #22ab76; }

.hidden-rows {
  position: absolute;
  left: 3px;
  top: 43px;
  width: 9px;
  height: 14px;
  border: 1px solid #cfd2d8;
  border-radius: 2px;
  background: #fff;
}
.hidden-rows::before, .hidden-rows::after { content: ""; position: absolute; left: 1px; border: 3px solid transparent; }
.hidden-rows::before { top: 1px; border-bottom-color: #6e7684; border-top: 0; }
.hidden-rows::after { bottom: 1px; border-top-color: #6e7684; border-bottom: 0; }

.chart { position: absolute; left: 553px; top: 19px; width: 469px; height: 240px; }
.chart text { font-size: 11px; fill: #595959; }
.chart .cat text { font-size: 12px; }

.vscroll { flex: none; width: 17px; display: flex; flex-direction: column; padding: 5px 2px 0 3px; border-right: 1px solid #e3e5ea; }
.split { flex: none; height: 4px; margin: 0 1px 5px; border: solid #8991a3; border-width: 1px 0; }
.track { flex: 1; display: flex; flex-direction: column; align-items: center; background: #eceef2; }
.track i { border: 3px solid transparent; }
.track .up { margin: 8px 0 24px; border-top: 0; border-bottom-color: #878f9d; }
.track .down { margin: auto 0 8px; border-bottom: 0; border-top-color: #878f9d; }
.thumb { width: 12px; height: 37%; border-radius: 6px; background: #d4d7de; }

/* Sheet tabs */
.sheet-tabs { flex: none; display: flex; height: 22px; border: solid #d9dce2; border-width: 1px 0; }
.tab-nav { display: flex; width: 121px; padding-left: 14px; gap: 16px; color: #8a92a0; }
.sheet-tab { height: 20px; padding: 1px 16px 0; background: #e4e6ed; color: #3b4352; }
.sheet-tab.active { width: 106px; margin: 0 5px 0 4px; padding: 1px 9px 0 0; text-align: right; border-bottom: 2px solid #b4c8e0; background: #fff; color: #1fad72; font-weight: bold; }
.sheet-tab.orange { background: #f4b083; }
.sheet-tab.last { padding: 1px 16px 0 19px; }
.add { width: 24px; }
.hscroll { flex: 1; min-width: 0; display: flex; align-items: center; gap: 10px; margin-left: auto; padding-right: 2px; max-width: 538px; }
.grip { width: 4px; height: 9px; border: solid #858d9c; border-width: 0 1px; }
.htrack { flex: 1; display: flex; align-items: center; height: 14px; background: #eaecf0; }
.htrack i { margin: 0 10px 0 4px; border: 3px solid transparent; border-left: 0; border-right-color: #878f9d; }
.hthumb { width: 125px; height: 12px; border-radius: 6px; background: #d4d7de; }

/* Side panel */
.side { flex: none; width: 37px; display: flex; flex-direction: column; align-items: center; gap: 12px; padding: 10px 0 0 7px; }
.side .plain { height: 24px; }
.side-grip { width: 20px; height: 4px; margin-bottom: 5px; border: solid #c3c7ce; border-width: 1px 0; }
.side .side-more { margin-top: auto; margin-bottom: 4px; }

/* Status bar */
.status {
  flex: none;
  height: 29px;
  display: flex;
  align-items: center;
  position: relative;
  padding: 1px 9px 0 15px;
  border-bottom: 1px solid #16323f;
}
.js { width: 32px; height: 18px; justify-content: flex-start; border-right: 1px solid #dcdfe5; }
.lock-holder { position: relative; margin: 0 20px 0 10px; }
.pay { gap: 3px; }
.tri-up { margin-left: 6px; border: 3px solid transparent; border-top: 0; border-bottom-color: #6c7482; }
output { margin-left: 16px; }
.status-right { display: flex; align-items: center; gap: 12px; margin-left: auto; }
.status-right .plain:first-child { margin-right: -5px; }
.status-right .vsep { margin-right: -2px; }
.views { display: flex; gap: 2px; }
.views .tool { width: 24px; }
.zoom-value { gap: 4px; }
.zoom { width: 140px; height: 16px; margin: 0 -3px 0 0; appearance: none; background: linear-gradient(#2d3a46, #2d3a46) center / 100% 1px no-repeat; }
.zoom::-webkit-slider-thumb { appearance: none; width: 12px; height: 12px; border: 1px solid #2d3a46; border-radius: 6px; background: #fff; }

.popup {
  position: absolute;
  left: 0;
  bottom: 31px;
  width: 304px;
  padding: 25px 19px 19px 20px;
  background: #fff;
  border-radius: 3px;
  box-shadow: 0 0 5px rgba(40, 50, 70, .3);
}
.popup::after {
  content: "";
  position: absolute;
  left: 17px;
  top: 100%;
  border: 10px solid transparent;
  border-top-color: #fff;
  border-bottom: 0;
}
.popup h2 { margin: 0 0 8px; font-size: 14px; line-height: 18px; color: #1f2937; }
.popup p { margin: 0 0 9px; line-height: 17px; color: #55607a; }
.popup a { display: block; text-align: right; color: #3f7fe8; }
.close { position: absolute; right: 10px; top: 11px; color: #858d99; }

.arrows { position: absolute; left: 0; bottom: 0; width: 120px; height: 140px; pointer-events: none; }
.shade { fill: #f01010; stroke: #c01010; stroke-width: 1; filter: drop-shadow(2px 2px 1px rgba(0, 0, 0, .5)); }

.watermark { position: absolute; right: 0; bottom: 0; width: 200px; height: 56px; pointer-events: none; }
.wm-name { font: bold 21px "Noto Sans CJK SC", sans-serif; fill: #7fa9d6; opacity: .85; }
.wm-url { font: 17px "Liberation Sans", sans-serif; fill: #4db366; stroke: #4db366; opacity: .85; }
```
